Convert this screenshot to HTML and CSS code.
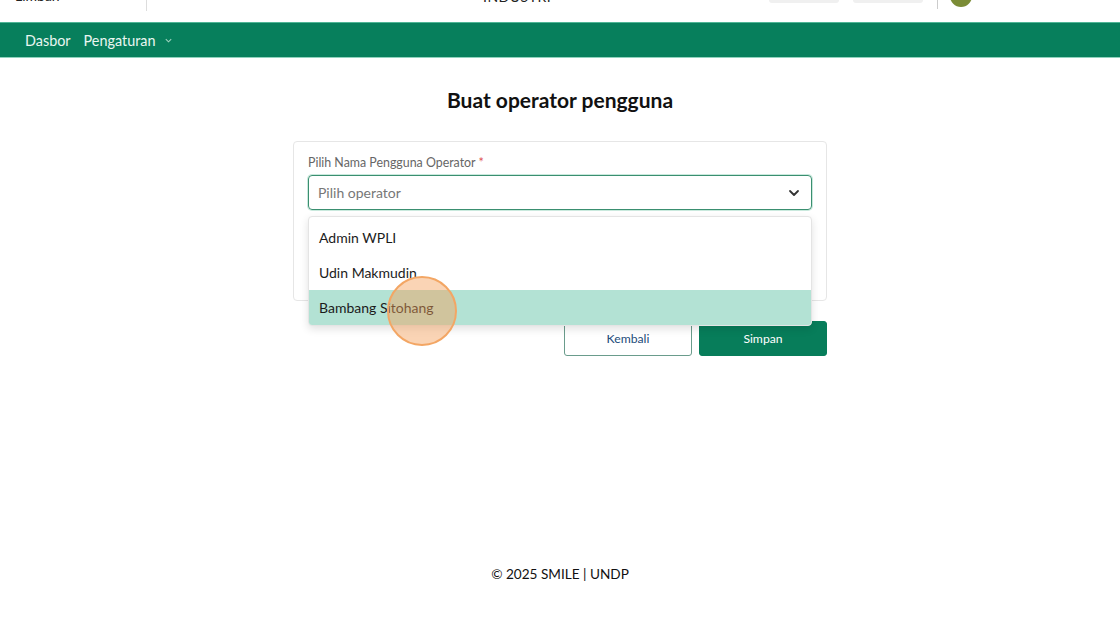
FILE: index.html
```html
<!DOCTYPE html>
<html lang="id">
<head>
    <meta charset="UTF-8">
    <meta name="viewport" content="width=device-width, initial-scale=1.0">
    <title>Buat operator pengguna</title>
    <link rel="stylesheet" href="styles.css">
</head>
<body>
    <header class="topbar">
        <div class="topbar-inner">
            <div class="brand">Limbah</div>
            <div class="topbar-title">INDUSTRI</div>
            <div class="topbar-right">
                <span class="pill"></span>
                <span class="pill"></span>
                <span class="sep"></span>
                <span class="avatar"></span>
            </div>
        </div>
    </header>

    <nav class="menu">
        <a href="#">Dasbor</a>
        <a href="#">Pengaturan
            <svg width="9" height="9" viewBox="0 0 10 10"><path d="M2 3.5l3 3 3-3" fill="none" stroke="#9fd3bf" stroke-width="1.2"/></svg>
        </a>
    </nav>

    <main class="content">
        <h1>Buat operator pengguna</h1>

        <div class="card">
            <label class="field-label">Pilih Nama Pengguna Operator <span class="req">*</span></label>
            <div class="select-wrap">
                <div class="select">
                    <span>Pilih operator</span>
                    <svg width="14" height="14" viewBox="0 0 14 14"><path d="M3 5l4 4 4-4" fill="none" stroke="#333" stroke-width="1.8" stroke-linecap="round" stroke-linejoin="round"/></svg>
                </div>
                <ul class="options">
                    <li>Admin WPLI</li>
                    <li>Udin Makmudin</li>
                    <li class="active">Bambang Sitohang</li>
                </ul>
                <div class="cursor"></div>
            </div>
            <div class="card-space"></div>
        </div>

        <div class="actions">
            <button class="btn btn-outline">Kembali</button>
            <button class="btn btn-primary">Simpan</button>
        </div>
    </main>

    <footer class="footer">© 2025 SMILE | UNDP</footer>
</body>
</html>
```

FILE: styles.css
```css
body {
    margin: 0;
    font-family: Lato, "Open Sans", sans-serif;
    background: #fff;
    color: #222;
}
.topbar {
    height: 22px;
    overflow: hidden;
    background: #fff;
}
.topbar-inner {
    display: flex;
    align-items: center;
    height: 36px;
    margin-top: -22px;
}
.brand {
    width: 131px;
    padding-left: 15px;
    font-size: 14px;
    color: #222;
    border-right: 1px solid #ddd;
    line-height: 30px;
    height: 30px;
}
.topbar-title {
    margin-left: 336px;
    font-size: 14px;
    letter-spacing: 0.5px;
    color: #222;
}
.topbar-right {
    display: flex;
    align-items: center;
    margin-left: 218px;
    gap: 14px;
}
.pill {
    width: 70px;
    height: 20px;
    background: #f0f0f0;
    border-radius: 3px;
    margin-top: -6px;
}
.sep {
    width: 1px;
    height: 26px;
    background: #ccc;
}
.avatar {
    width: 22px;
    height: 22px;
    border-radius: 50%;
    background: #7b8c36;
    margin-left: -2px;
}
.menu {
    display: flex;
    align-items: center;
    gap: 13px;
    height: 36px;
    padding-left: 25px;
    background: #077f5c;
    border-top: 1px solid #4fb596;
    border-bottom: 1px solid #8fd2bd;
    box-sizing: border-box;
}
.menu a {
    color: #eaf6f1;
    text-decoration: none;
    font-size: 14.4px;
    display: flex;
    align-items: center;
    gap: 8px;
}
.content {
    width: 534px;
    margin: 0 auto;
    padding-top: 29px;
}
h1 {
    margin: 0 0 29px;
    text-align: center;
    font-size: 21px;
    font-weight: 700;
    color: #111;
}
.card {
    border: 1px solid #e6e6e6;
    border-radius: 4px;
    padding: 13px 14px 0;
}
.field-label {
    display: block;
    font-size: 12.4px;
    color: #666;
    margin-bottom: 5px;
}
.req {
    color: #e05555;
}
.select-wrap {
    position: relative;
}
.select {
    display: flex;
    align-items: center;
    justify-content: space-between;
    height: 35px;
    box-sizing: border-box;
    padding: 0 10px 0 9px;
    border: 1px solid #3a8f70;
    border-radius: 4px;
    box-shadow: 0 0 0 1px #c9e9dd;
    font-size: 14px;
    color: #777;
}
.options {
    position: absolute;
    top: 41px;
    left: 0;
    right: 0;
    margin: 0;
    padding: 3px 0 0;
    list-style: none;
    background: #fff;
    border: 1px solid #e4e4e4;
    border-radius: 4px;
    box-shadow: 0 3px 8px rgba(0,0,0,0.12);
    z-index: 2;
    overflow: hidden;
}
.options li {
    height: 35px;
    line-height: 35px;
    padding-left: 10px;
    font-size: 14px;
    color: #1b1b1b;
}
.options li.active {
    background: #b3e2d4;
}
.cursor {
    position: absolute;
    left: 79px;
    top: 101px;
    width: 66px;
    height: 66px;
    border-radius: 50%;
    border: 2px solid #f3a664;
    background: rgba(245, 160, 90, 0.45);
    z-index: 3;
}
.card-space {
    height: 90px;
}
.actions {
    display: flex;
    justify-content: flex-end;
    gap: 7px;
    margin-top: 20px;
}
.btn {
    width: 128px;
    height: 35px;
    border-radius: 3px;
    font-family: inherit;
    font-size: 12.2px;
    cursor: pointer;
}
.btn-outline {
    background: #fff;
    border: 1px solid #6a9c8c;
    color: #234c7a;
}
.btn-primary {
    background: #077d5a;
    border: 1px solid #077d5a;
    color: #fff;
}
.footer {
    margin-top: 210px;
    text-align: center;
    font-size: 13.6px;
    color: #111;
}
```
